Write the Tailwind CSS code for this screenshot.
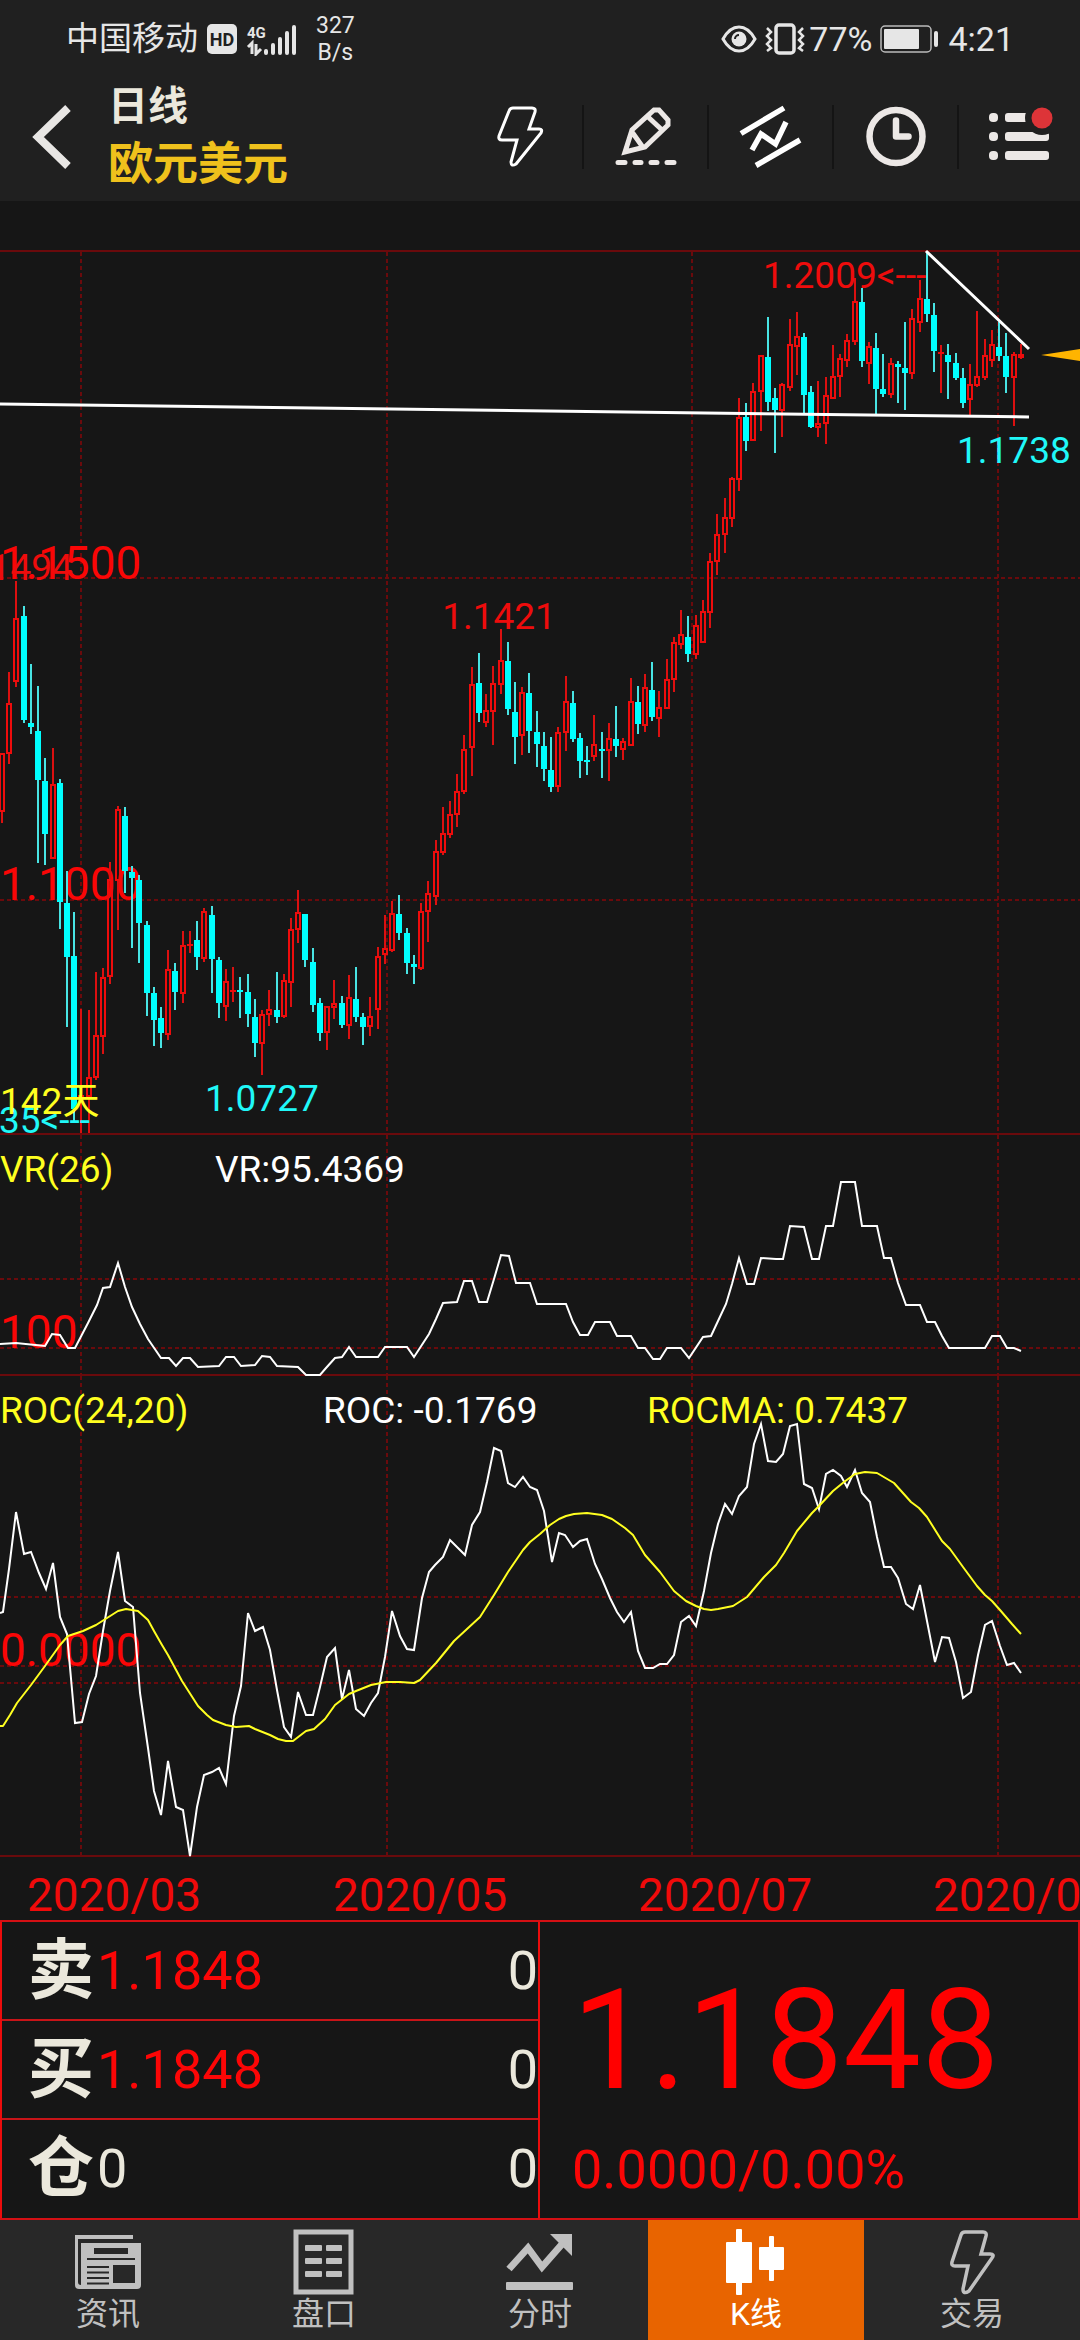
<!DOCTYPE html>
<html lang="zh-CN">
<head>
<meta charset="utf-8">
<meta name="viewport" content="width=device-width, initial-scale=1">
<title>欧元美元 日线</title>
<script src="https://cdn.jsdelivr.net/npm/@tailwindcss/browser@4"></script>
</head>
<body class="bg-[#161616] text-[#ebe8dc] font-[Roboto,'Noto_Sans_CJK_SC',sans-serif]">

<header class="bg-[#202020]">
  <!-- Status bar -->
  <div class="flex h-[78px] items-center justify-between pl-[66px] pr-[66px] text-[#e6e6e6]">
    <div class="flex items-center">
      <span class="text-[33px] leading-10">中国移动</span>
      <svg class="ml-2 h-[32px] w-[32px]" viewBox="0 0 32 32" role="img" aria-label="HD">
        <rect x="1" y="1" width="30" height="30" rx="5" fill="#e6e6e6"/>
        <text x="16" y="22.500" text-anchor="middle" font-family="Roboto" font-size="18" font-weight="700" fill="#202020">HD</text>
      </svg>
      <svg class="ml-2 h-[34px] w-[54px]" viewBox="0 0 54 34" role="img" aria-label="4G signal">
        <text x="1" y="16" font-family="Roboto" font-size="15" font-weight="700" fill="#e6e6e6">4G</text>
        <path d="M2 25l4-4v11M10 22v10l5-5" fill="none" stroke="#e6e6e6" stroke-width="3"/>
        <g stroke="#e6e6e6" stroke-width="4" stroke-linecap="round"><path d="M20 29v2M27 23v8M34 17v14M41 11v20M48 5v26"/></g>
      </svg>
      <span class="ml-4 text-center text-[23px] leading-[27px]">327<br>B/s</span>
    </div>
    <div class="flex items-center text-[34px] leading-10">
      <svg class="h-[30px] w-[36px]" viewBox="0 0 36 30" aria-hidden="true">
        <path d="M2 15C7 6 12 3 18 3s11 3 16 12c-5 9-10 12-16 12S7 24 2 15z" fill="none" stroke="#e6e6e6" stroke-width="3"/>
        <circle cx="18" cy="15" r="7.500" fill="#e6e6e6"/><path d="M14 15a4 4 0 0 1 4-4" fill="none" stroke="#202020" stroke-width="2"/>
      </svg>
      <svg class="ml-2 h-[34px] w-[40px]" viewBox="0 0 40 34" aria-hidden="true">
        <rect x="11" y="3" width="18" height="28" rx="3" fill="none" stroke="#e6e6e6" stroke-width="3.500"/>
        <path d="M2 6l4 4-4 4 4 4-4 4 4 4-4 3M38 6l-4 4 4 4-4 4 4 4-4 4 4 3" fill="none" stroke="#e6e6e6" stroke-width="2.500"/>
      </svg>
      <span class="ml-1">77%</span>
      <svg class="ml-2 h-[30px] w-[60px]" viewBox="0 0 60 30" aria-hidden="true">
        <rect x="1" y="2" width="50" height="26" rx="4" fill="none" stroke="#bbb" stroke-width="1.500"/>
        <rect x="4" y="5" width="35" height="20" rx="1" fill="#e6e6e6"/><rect x="54" y="7" width="4" height="16" rx="2" fill="#e6e6e6"/>
      </svg>
      <span class="ml-2">4:21</span>
    </div>
  </div>

  <!-- Title bar -->
  <div class="flex h-[123px] items-start">
    <button class="ml-8 mt-[26px]" aria-label="返回">
      <svg class="h-[66px] w-[40px]" viewBox="0 0 40 66"><path d="M36 4L6 33l30 29" fill="none" stroke="#e8e6e4" stroke-width="8"/></svg>
    </button>
    <div class="ml-9 grow pt-0.5">
      <p class="text-[40px] font-bold leading-[54px]">日线</p>
      <h1 class="text-[45px] font-bold leading-[62px] text-[#efc11c]">欧元美元</h1>
    </div>
    <nav class="mt-[27px] flex" aria-label="工具">
      <button class="flex w-[125px] justify-center" aria-label="闪电下单">
        <svg class="size-16" viewBox="0 0 64 64"><path d="M25 3H44q4 0 3 4L41 24H51q4 0 2 4L28 59q-5 3-5-2L29 35H14q-4 0-3-4L21 6q1-3 4-3z" fill="none" stroke="#fff" stroke-width="3"/></svg>
      </button>
      <button class="flex w-[125px] justify-center border-l-2 border-[#141414]" aria-label="画线">
        <svg class="size-16" viewBox="0 0 64 64" fill="none" stroke="#ece8e6" stroke-width="5"><path d="M11 47L18 25 40 5h5l9 10v5L31 42zM33 11l14 13M18 27l10 14"/><path d="M4 57.500h7M21 57.500h6M37 57.500h6M53 57.500h7" stroke-linecap="round"/></svg>
      </button>
      <button class="flex w-[125px] justify-center border-l-2 border-[#141414]" aria-label="指标">
        <svg class="size-16" viewBox="0 0 64 64" fill="none" stroke="#fff" stroke-width="5.500"><path d="M2 28.500L45 3M17 60.500L61 35M13 45l9-16 14.500 10L47 17"/></svg>
      </button>
      <button class="flex w-[125px] justify-center border-l-2 border-[#141414]" aria-label="周期">
        <svg class="size-16" viewBox="0 0 64 64" fill="none" stroke="#ece8e6" stroke-width="6.500" stroke-linecap="round" stroke-linejoin="round"><circle cx="32" cy="31.500" r="26.500"/><path d="M32 15.500v16h12.500"/></svg>
      </button>
      <button class="flex w-[123px] justify-center border-l-2 border-[#141414]" aria-label="菜单">
        <svg class="size-16 overflow-visible" viewBox="0 0 64 64" fill="#ece8e6"><rect x="1" y="8" width="9" height="9" rx="4"/><rect x="1" y="27" width="9" height="9" rx="4"/><rect x="1" y="46" width="9" height="9" rx="4"/><rect x="17" y="8" width="26" height="9" rx="3"/><rect x="17" y="27" width="44" height="9" rx="3"/><rect x="17" y="46" width="44" height="9" rx="3"/><circle cx="54" cy="13" r="17" fill="#202020"/><circle cx="54" cy="13" r="10.500" fill="#dd3438"/></svg>
      </button>
    </nav>
  </div>
</header>

<main>
  <!-- Price panel -->
  <svg class="block h-auto w-full" viewBox="0 201 1080 934" role="img" aria-label="K线图">
    <g stroke="#6a0a0c" stroke-width="2">
      <path d="M0 251H1080M0 1134H1080"/>
      <path d="M0 578H1080M0 900H1080M81 252V1134M387 252V1134M692 252V1134M998 252V1134" stroke-dasharray="4 3"/>
    </g>
    <g font-size="46" fill="#fa0606"><text x="0" y="579">1.1500</text><text x="0" y="900">1.1000</text></g>
    <g id="candles"></g>
    <g font-size="37" fill="#ee0c0c">
      <text x="16" y="580" text-anchor="middle">1.1494</text>
      <text x="499" y="629" text-anchor="middle">1.1421</text>
      <text x="763" y="288">1.2009&lt;---</text>
    </g>
    <g font-size="37" fill="#20f8f8">
      <text x="205" y="1111">1.0727</text>
      <text x="957" y="463">1.1738</text>
      <text x="90" y="1133" text-anchor="end">1.0635&lt;---</text>
    </g>
    <text x="0" y="1114" font-size="37" fill="#ffff20">142天</text>
    <path d="M0 404L1029 417M926 251L1029 349" stroke="#fff" stroke-width="3"/>
    <path d="M1041 355L1080 349V361z" fill="#ffb400"/>
  </svg>

  <!-- VR panel -->
  <svg class="block h-auto w-full" viewBox="0 1135 1080 241" role="img" aria-label="VR">
    <g stroke="#6a0a0c" stroke-width="2">
      <path d="M0 1375H1080"/>
      <path d="M0 1279H1080M0 1348H1080M81 1135V1376M387 1135V1376M692 1135V1376M998 1135V1376" stroke-dasharray="4 3"/>
    </g>
    <text x="0" y="1348" font-size="46" fill="#fa0606">100</text>
    <g font-size="37"><text x="0" y="1182" fill="#ffff20">VR(26)</text><text x="215" y="1182" fill="#fff">VR:95.4369</text></g>
    <polyline fill="none" stroke="#fff" stroke-width="2" points="0,1344 16,1343 45,1346 52,1334 60,1335 68,1348 75,1348 88,1323 97,1305 103,1288 110,1287 118,1263 125,1287 132,1307 140,1324 148,1339 161,1358 169,1358 176,1366 183,1358 190,1358 198,1367 219,1366 226,1357 234,1357 241,1366 255,1365 262,1356 270,1357 277,1366 298,1367 306,1375 320,1375 326,1368 335,1358 342,1357 349,1347 356,1357 378,1357 385,1347 407,1347 414,1357 429,1334 436,1319 443,1303 457,1302 464,1281 472,1281 479,1302 487,1302 494,1279 501,1255 509,1256 516,1283 530,1283 537,1304 566,1304 573,1322 580,1335 588,1335 595,1322 610,1322 617,1336 631,1336 638,1348 645,1348 653,1359 660,1359 667,1348 681,1348 689,1358 703,1337 711,1336 718,1321 726,1304 732,1284 739,1258 747,1284 754,1284 761,1258 776,1259 783,1259 790,1226 804,1227 812,1259 819,1259 826,1226 833,1226 841,1182 855,1182 862,1226 877,1226 884,1258 891,1258 898,1283 906,1305 920,1305 927,1322 935,1322 942,1336 949,1348 985,1348 992,1336 1000,1336 1007,1348 1014,1348 1021,1351"/>
  </svg>

  <!-- ROC panel -->
  <svg class="block h-auto w-full" viewBox="0 1376 1080 482" role="img" aria-label="ROC">
    <g stroke="#6a0a0c" stroke-width="2">
      <path d="M0 1856H1080"/>
      <path d="M0 1597H1080M0 1666H1080M0 1683H1080M81 1376V1856M387 1376V1856M692 1376V1856M998 1376V1856" stroke-dasharray="4 3"/>
    </g>
    <text x="0" y="1666" font-size="46" fill="#fa0606">0.0000</text>
    <g font-size="37"><text x="0" y="1423" fill="#ffff20">ROC(24,20)</text><text x="323" y="1423" fill="#fff">ROC: -0.1769</text><text x="647" y="1423" fill="#ffff20">ROCMA: 0.7437</text></g>
    <polyline fill="none" stroke="#fff" stroke-width="2" points="0,1613 3,1612 9,1569 16,1512 24,1554 31,1552 39,1573 46,1589 53,1563 60,1617 67,1634 75,1723 82,1722 89,1694 96,1676 103,1631 110,1591 118,1552 125,1601 133,1607 140,1693 148,1748 154,1791 161,1815 168,1761 176,1807 183,1810 190,1856 197,1807 204,1775 212,1772 219,1768 226,1784 234,1716 241,1686 248,1613 255,1631 263,1627 270,1650 277,1690 284,1727 291,1737 298,1692 306,1715 313,1715 320,1687 327,1657 335,1648 342,1699 349,1670 356,1709 364,1716 371,1703 378,1693 385,1657 392,1611 400,1636 407,1649 414,1650 422,1598 429,1572 435,1565 443,1557 450,1540 465,1555 472,1525 480,1512 487,1482 494,1448 501,1451 508,1483 515,1487 523,1477 530,1487 537,1490 544,1511 552,1562 559,1533 565,1535 573,1547 580,1541 587,1539 595,1564 602,1579 610,1598 617,1612 624,1622 631,1612 638,1651 645,1668 653,1668 660,1664 667,1664 674,1655 681,1622 689,1616 696,1626 704,1591 711,1553 718,1524 725,1504 732,1514 739,1496 747,1487 754,1444 761,1424 768,1461 776,1462 783,1454 790,1426 797,1424 804,1484 812,1488 819,1509 826,1474 833,1470 841,1476 847,1487 855,1470 862,1493 870,1502 877,1537 884,1567 891,1567 898,1578 906,1604 913,1609 920,1585 927,1621 935,1662 942,1637 949,1638 956,1662 963,1698 971,1692 978,1655 985,1625 992,1621 1000,1646 1007,1665 1014,1663 1021,1673"/>
    <polyline fill="none" stroke="#ffff20" stroke-width="2" stroke-linejoin="round" points="0,1726 3,1726 10,1715 17,1703 31,1685 45,1666 60,1645 68,1636 83,1631 96,1625 118,1611 126,1609 138,1611 148,1620 154,1631 162,1645 168,1655 182,1681 198,1706 207,1715 213,1720 226,1725 236,1727 249,1726 255,1729 270,1735 278,1739 286,1741 293,1741 306,1731 314,1729 325,1719 335,1705 349,1694 356,1691 371,1685 386,1682 400,1682 414,1683 420,1680 436,1663 454,1641 480,1617 494,1595 508,1572 523,1550 530,1542 540,1534 550,1525 559,1519 566,1516 574,1514 587,1513 602,1515 612,1519 625,1528 633,1535 645,1555 660,1572 674,1591 686,1601 696,1606 704,1609 711,1610 718,1609 733,1606 747,1597 764,1577 776,1565 784,1553 797,1531 812,1513 819,1506 833,1491 844,1482 855,1474 865,1472 877,1473 894,1483 911,1502 919,1508 927,1517 942,1541 950,1549 963,1567 977,1586 985,1595 992,1601 1000,1610 1012,1624 1021,1634"/>
  </svg>

  <!-- Date axis -->
  <svg class="block h-auto w-full" viewBox="0 1858 1080 62" role="img" aria-label="日期" font-size="46" fill="#f00a0a">
    <text x="27" y="1911">2020/03</text><text x="333" y="1911">2020/05</text><text x="638" y="1911">2020/07</text><text x="933" y="1911">2020/09</text>
  </svg>

  <!-- Quote -->
  <section class="flex border-y-2 border-[#d41014]">
    <table class="w-1/2 table-fixed border-separate border-spacing-0 border-x-2 border-[#ec0c0c] text-[54px] leading-none">
      <tbody>
        <tr class="h-[99px]"><th scope="row" class="w-[95px] border-b-2 border-[#c81418] pl-[26px] text-left text-[66px] leading-none">卖</th><td class="border-b-2 border-[#c81418] text-[#fc0606]">1.1848</td><td class="border-b-2 border-[#c81418] text-right">0</td></tr>
        <tr class="h-[99px]"><th scope="row" class="border-b-2 border-[#c81418] pl-[26px] text-left text-[66px] leading-none">买</th><td class="border-b-2 border-[#c81418] text-[#fc0606]">1.1848</td><td class="border-b-2 border-[#c81418] text-right">0</td></tr>
        <tr class="h-[98px]"><th scope="row" class="pl-[26px] text-left text-[66px] leading-none">仓</th><td>0</td><td class="text-right">0</td></tr>
      </tbody>
    </table>
    <div class="w-1/2 border-r-2 border-[#d41014] pl-8 pt-[38px]">
      <p class="text-[139px] leading-[162px] text-[#ff0000]">1.1848</p>
      <p class="text-[54px] leading-[96px] text-[#fa0606]">0.0000/0.00%</p>
    </div>
  </section>
</main>

<!-- Tab bar -->
<nav class="grid h-[120px] grid-cols-5 bg-[#282828] text-[32px] leading-9 text-[#c0c0c0]" aria-label="主导航">
  <a href="#news" class="flex flex-col items-center pt-2">
    <svg class="h-[68px] w-[72px]" viewBox="0 0 72 68"><path d="M3 7H61v4H6V54q0 3 3 3V15H69V57q0 4-4 4H7q-4 0-4-4z" fill="#c0c0c0"/><g fill="#282828"><path d="M22 20H56v6H22zM15 30H63v2H15zM15 38H37v2H15zM15 43.500H37v2H15zM15 49H37v2H15zM15 54.500H37v2H15zM41 37H63V55H41z"/></g></svg>
    <span>资讯</span></a>
  <a href="#depth" class="flex flex-col items-center pt-2">
    <svg class="h-[68px] w-[72px]" viewBox="0 0 72 68"><rect x="8" y="4" width="55" height="60" fill="none" stroke="#c0c0c0" stroke-width="5"/><g fill="#c0c0c0"><rect x="17" y="17" width="17" height="6" rx="1"/><rect x="38" y="17" width="16" height="6" rx="1"/><rect x="17" y="30" width="17" height="6" rx="1"/><rect x="38" y="30" width="16" height="6" rx="1"/><rect x="17" y="43" width="17" height="6" rx="1"/><rect x="38" y="43" width="16" height="6" rx="1"/></g></svg>
    <span>盘口</span></a>
  <a href="#intraday" class="flex flex-col items-center pt-2">
    <svg class="h-[68px] w-[72px]" viewBox="0 0 72 68"><path d="M5 41L24 20 38 39 59 15" fill="none" stroke="#c0c0c0" stroke-width="7"/><path d="M46 6H68V28z" fill="#c0c0c0"/><rect x="2" y="54" width="67" height="8" rx="1" fill="#c0c0c0"/></svg>
    <span>分时</span></a>
  <a href="#kline" class="flex flex-col items-center bg-[#e86400] pt-2 text-white" aria-current="page">
    <svg class="h-[68px] w-[72px]" viewBox="0 0 72 68" fill="#fff"><rect x="6" y="14" width="26" height="41" rx="1"/><rect x="16" y="1" width="6" height="66" rx="1"/><rect x="39" y="19" width="25" height="23" rx="1"/><rect x="49" y="8" width="5" height="45" rx="1"/></svg>
    <span>K线</span></a>
  <a href="#trade" class="flex flex-col items-center pt-2">
    <svg class="h-[68px] w-[72px]" viewBox="-4 -1 72 68"><path d="M25 3H43q4 0 3 4L41 25H50q5 0 2 4L29 62q-6 4-6-2L28 37H15q-4 0-3-4L21 6q1-3 4-3z" fill="none" stroke="#c0c0c0" stroke-width="3.500"/></svg>
    <span>交易</span></a>
</nav>

<script>
// Each candle: direction (r = up, c = down), then y of high, body top, body bottom, low
const data = `r753,753,812,823 r672,703,754,764 r581,618,682,687 c606,616,720,723 c664,723,727,734 c686,731,780,863 c758,781,834,865 r748,784,859,859 c779,783,902,929 c871,903,957,1027
c912,956,1109,1121 r1009,1095,1098,1133 r1010,1077,1097,1133 r972,1035,1078,1080 r968,977,1037,1054 r862,879,977,984 r806,809,881,930 c807,816,871,893 c866,872,878,948 c875,880,923,963
c921,925,993,1016 c987,993,1020,1046 c1007,1018,1033,1048 r950,969,1035,1040 c963,971,992,1010 r931,945,994,1003 r931,944,946,953 c921,940,957,970 r908,911,959,962 c906,915,959,993
c957,960,1003,1018 r969,981,1007,1021 r967,990,992,1002 c977,990,992,1018 c974,992,1014,1027 c999,1017,1043,1057 r1010,1014,1044,1075 r990,1009,1015,1026 c972,1010,1017,1023 r974,980,1017,1018
r918,929,983,1007 r890,912,930,943 c914,914,960,967 c948,962,1005,1012 c998,1003,1033,1041 r1006,1006,1033,1050 r980,1003,1008,1019 c996,1003,1025,1028 r975,997,1026,1039 c967,999,1017,1022
c1013,1017,1027,1045 r997,1016,1027,1036 r947,956,1010,1029 r915,948,955,964 r901,913,951,952 c895,914,933,940 c928,933,963,974 c955,964,967,984 r903,911,969,970 r881,893,912,942
r840,851,897,905 r807,833,853,855 r801,814,835,838 r774,791,815,827 r735,749,792,794 r667,684,748,776 c653,683,713,722 r694,710,723,727 r666,683,712,745 r629,660,685,694
c642,661,709,715 c682,712,737,764 r687,692,736,755 c673,693,731,753 c711,732,744,767 c732,746,769,781 c737,770,787,792 r727,732,787,792 r676,701,733,751 c691,703,739,742
c733,738,761,778 c746,760,762,775 r715,744,757,761 c732,749,751,778 r723,738,751,781 c706,739,746,757 r738,741,750,760 r678,701,746,746 c686,702,724,734 r674,687,726,732
c662,690,717,721 r691,707,719,737 r659,679,709,709 r637,642,680,692 r610,634,645,649 c616,637,654,662 r615,625,655,659 r600,611,643,643 r553,561,613,628 r514,534,562,575
r498,517,535,553 r477,478,519,527 r398,417,480,491 c403,417,441,451 r383,391,441,441 r355,355,392,431 c317,357,402,411 c388,398,410,453 r383,384,411,437 r319,344,388,391
r312,336,347,375 c333,337,395,415 c386,392,427,428 r381,423,428,437 r377,395,424,444 r345,376,399,399 r354,358,377,397 r334,340,361,367 r278,301,342,345 c288,302,361,367
r342,346,364,384 c333,348,389,415 c354,389,394,397 r358,363,395,398 c361,364,367,403 c322,368,373,410 r309,318,374,379 r280,298,323,332 c252,299,314,322 c303,315,351,372
r345,352,354,393 c344,355,362,399 c353,363,378,380 c368,378,403,408 r364,384,400,415 r311,376,386,387 r339,355,378,380 r330,344,361,367 c322,347,356,361 c333,356,377,393
r352,354,378,426 r344,354,358,359`.trim().split(/\s+/);
document.getElementById('candles').innerHTML = data.map((d, i) => {
  const [high, top, bottom, low] = d.slice(1).split(',').map(Number);
  const x = Math.round(2 + i * 7.225);
  if (d[0] === 'c') {
    return `<path d="M${x} ${high}V${low}" stroke="#48e4e4" stroke-width="2"/><rect x="${x - 3}" y="${top}" width="6" height="${bottom - top}" fill="#00ffff"/>`;
  }
  const h = bottom - top;
  const body = h < 4
    ? `<rect x="${x - 3}" y="${top}" width="6" height="${h}" fill="#ee0c0c"/>`
    : `<rect x="${x - 2}" y="${top + 1}" width="4" height="${h - 2}" fill="none" stroke="#ee0c0c" stroke-width="2"/>`;
  return `<path d="M${x} ${high}V${top}M${x} ${bottom}V${low}" stroke="#dc1010" stroke-width="2"/>` + body;
}).join('');
</script>
</body>
</html>
